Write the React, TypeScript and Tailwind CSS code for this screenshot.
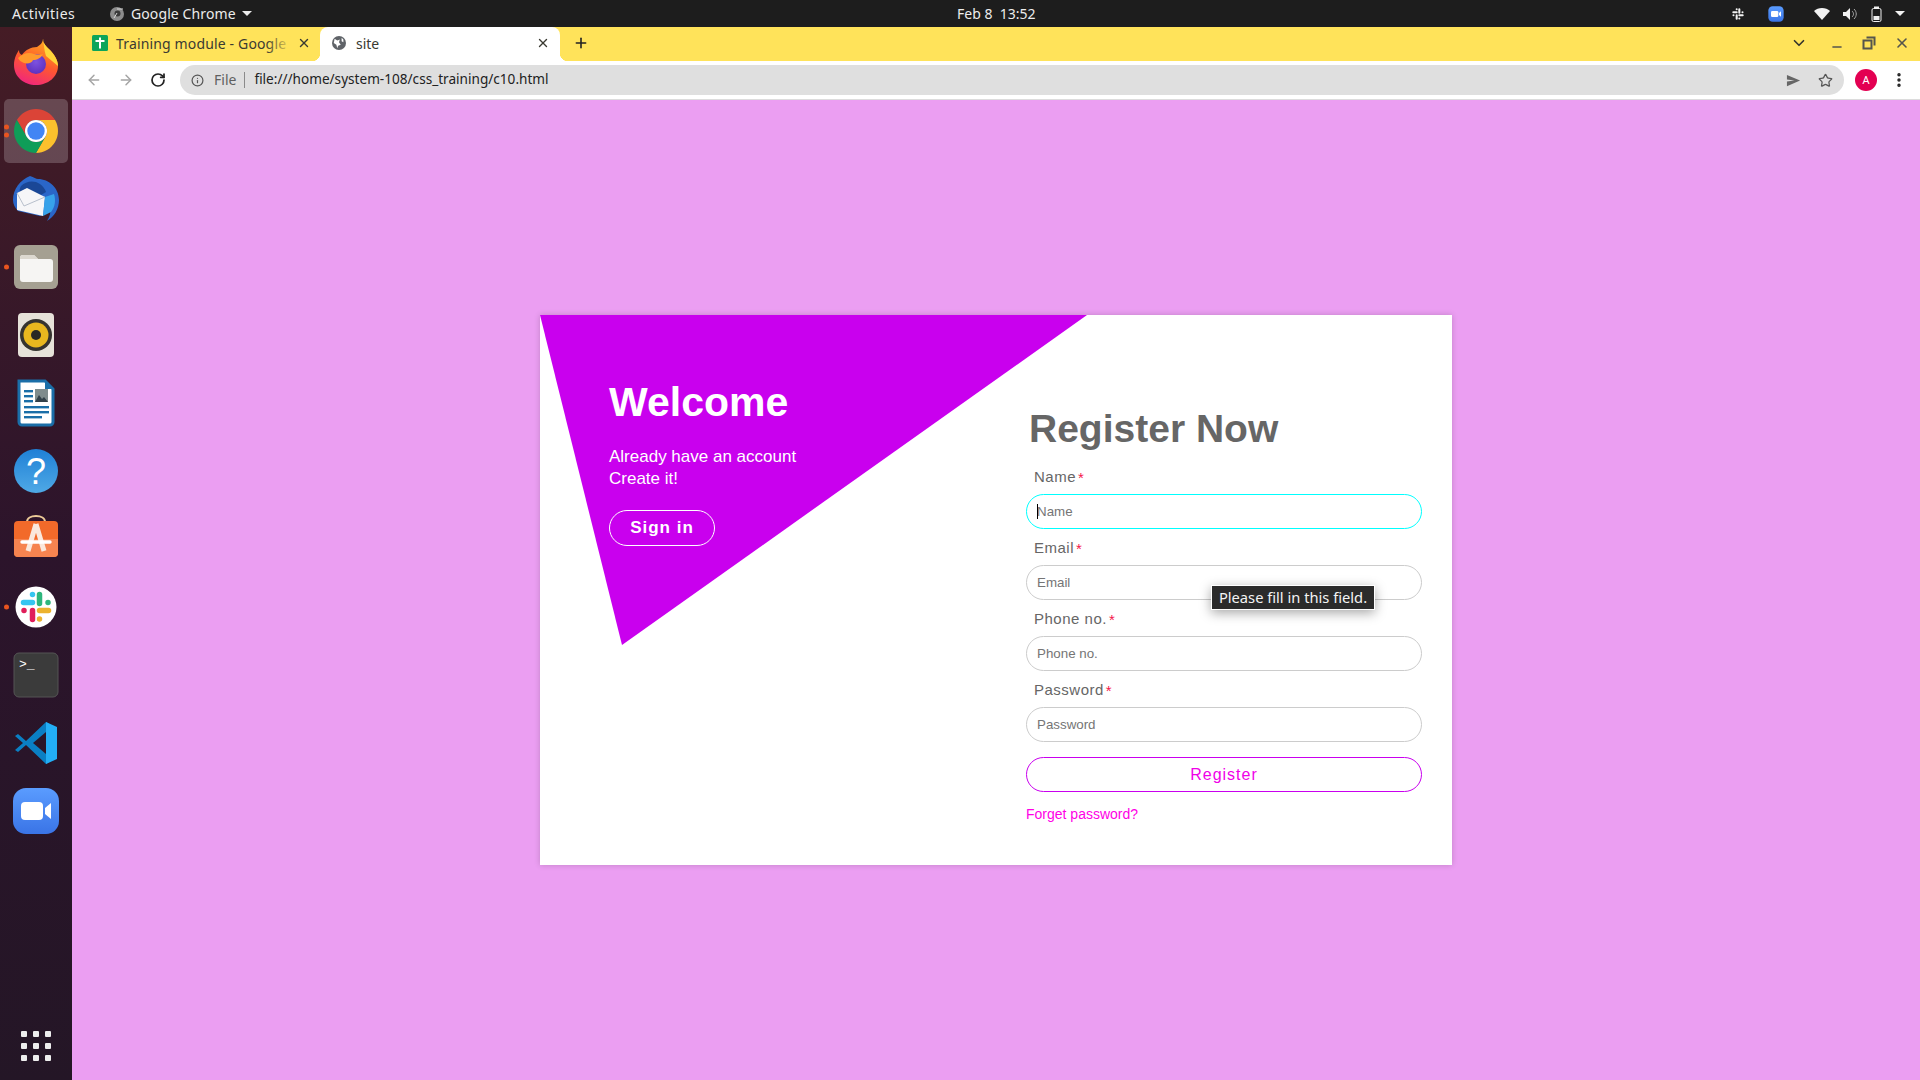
import type { ReactNode } from "react";
import { ArrowLeft, ArrowRight, ChevronDown, EllipsisVertical, Info, Minus, Plus, RotateCw, Star, X } from "lucide-react";

function DockFirefox() {
  return (
    <svg viewBox="0 0 48 48" className="h-12 w-12">
      <defs>
        <linearGradient id="ffBody" x1="0.7" y1="0" x2="0.3" y2="1">
          <stop offset="0" stopColor="#ffb020" />
          <stop offset="0.5" stopColor="#ff5a2c" />
          <stop offset="1" stopColor="#f0257e" />
        </linearGradient>
        <radialGradient id="ffCore" cx="0.5" cy="0.4" r="0.7">
          <stop offset="0" stopColor="#7d52e0" />
          <stop offset="1" stopColor="#5a2bb8" />
        </radialGradient>
      </defs>
      <g transform="translate(0,-1)">
        <path d="M31 0c0 6 3 8 7 12 5 5 8 11 8 16 0 11-10 19-22 19S2 39 2 27c0-7 3-12 5-15 0 3 1 4 3 5 3-5 9-8 15-8 3-2 6-4 6-9Z" fill="url(#ffBody)" />
        <path d="M31 0c0 6 3 8 7 12 5 5 8 11 8 16l-12-10c-2-6-2-11-3-18Z" fill="#ffd53a" />
        <circle cx="24" cy="26" r="10" fill="url(#ffCore)" />
        <path d="M6 20c5-5 11-6 16-4 4 1 7 1 9 0-2 4-6 6-10 6-1 3-5 4-9 3-3-1-5-3-6-5Z" fill="#ff9a2c" />
      </g>
    </svg>
  );
}

function DockChrome() {
  return (
    <svg viewBox="0 0 48 48" className="h-12 w-12">
      <path d="M4.95 13A22 22 0 0 1 43.05 13L24 13A11 11 0 0 0 14.47 29.5Z" fill="#db4437" />
      <path d="M43.05 13A22 22 0 0 1 24 46L33.53 29.5A11 11 0 0 0 24 13Z" fill="#fbc02d" />
      <path d="M24 46A22 22 0 0 1 4.95 13L14.47 29.5A11 11 0 0 0 33.53 29.5Z" fill="#0f9d58" />
      <circle cx="24" cy="24" r="11" fill="#fff" />
      <circle cx="24" cy="24" r="8.7" fill="#4285f4" />
    </svg>
  );
}

function DockThunderbird() {
  return (
    <svg viewBox="0 0 48 48" className="h-12 w-12">
      <path d="M18 1c4 1 6 3 8 3 11 0 21 9 21 21 0 9-5 17-12 21 3-5 4-9 3-13-3 4-6 7-10 8L6 36c-3-3-5-7-5-11C1 14 8 5 18 1Z" fill="#2a66c8" />
      <path d="M9 11c5-5 13-6 19-2 3 2 5 5 6 8l-10 6L8 18c-1-3 0-5 1-7Z" fill="#1a4796" />
      <path d="M5 18l10-5 18 9-2 19-26-6Z" fill="#f6f6f8" />
      <path d="M5 18l7 13 21-9" fill="none" stroke="#b8c0cc" strokeWidth="1" />
      <path d="M33 22l9-3c2 6 1 13-3 18l-8 4Z" fill="#37a2ea" />
    </svg>
  );
}

function DockFiles() {
  return (
    <svg viewBox="0 0 48 48" className="h-12 w-12">
      <rect x="2" y="2" width="44" height="44" rx="6" fill="#a5a092" />
      <path d="M8 15a3 3 0 0 1 3-3h11l4 4h12a3 3 0 0 1 3 3v17a3 3 0 0 1-3 3H11a3 3 0 0 1-3-3Z" fill="#f6f5f3" />
      <path d="M8 15a3 3 0 0 1 3-3h11l4 4H8Z" fill="#dcd8cf" />
    </svg>
  );
}

function DockRhythmbox() {
  return (
    <svg viewBox="0 0 48 48" className="h-12 w-12">
      <rect x="6" y="2" width="36" height="44" rx="4" fill="#e6e2d9" />
      <circle cx="24" cy="24" r="16" fill="#35332f" />
      <circle cx="24" cy="24" r="12.5" fill="#e8b71f" />
      <circle cx="24" cy="24" r="5" fill="#2a2824" />
    </svg>
  );
}

function DockWriter() {
  return (
    <svg viewBox="0 0 48 48" className="h-12 w-12">
      <path d="M7 2h26l8 8v33a3 3 0 0 1-3 3H10a3 3 0 0 1-3-3Z" fill="#fff" stroke="#1a6ea8" strokeWidth="3" />
      <path d="M33 1l9 9h-9Z" fill="#1a6ea8" />
      <rect x="12" y="11" width="9" height="2.4" fill="#1a6ea8" />
      <rect x="12" y="16" width="9" height="2.4" fill="#1a6ea8" />
      <rect x="12" y="21" width="9" height="2.4" fill="#1a6ea8" />
      <rect x="23" y="10" width="13" height="13" fill="#7f8c8d" />
      <path d="M23 23l4-7 3 4 2-2 4 5Z" fill="#33414a" />
      <rect x="12" y="27" width="25" height="2.4" fill="#1a6ea8" />
      <rect x="12" y="32" width="25" height="2.4" fill="#1a6ea8" />
      <rect x="12" y="37" width="18" height="2.4" fill="#1a6ea8" />
    </svg>
  );
}

function DockHelp() {
  return (
    <svg viewBox="0 0 48 48" className="h-12 w-12">
      <defs>
        <linearGradient id="helpFill" x1="0" y1="0" x2="0" y2="1">
          <stop offset="0" stopColor="#1f80d6" />
          <stop offset="1" stopColor="#4fa9e6" />
        </linearGradient>
      </defs>
      <circle cx="24" cy="24" r="22" fill="url(#helpFill)" />
      <text x="24" y="37" textAnchor="middle" fontSize="36" fill="#fff" className="font-['Liberation_Sans',sans-serif]">?</text>
    </svg>
  );
}

function DockShop() {
  return (
    <svg viewBox="0 0 48 48" className="h-12 w-12">
      <path d="M15 7c0-4 4-6 9-6s9 2 9 6" fill="none" stroke="#eccb98" strokeWidth="2" />
      <path d="M2 10a4 4 0 0 1 4-4h36a4 4 0 0 1 4 4v28a4 4 0 0 1-4 4H6a4 4 0 0 1-4-4Z" fill="#f26a2a" />
      <path d="M2 24h44v14a4 4 0 0 1-4 4H6a4 4 0 0 1-4-4Z" fill="#f68450" />
      <path d="M24 9L16 36M24 9l8 27" stroke="#fae8dc" strokeWidth="5" fill="none" />
      <path d="M10 27h28" stroke="#fff" strokeWidth="3.4" strokeLinecap="round" />
    </svg>
  );
}

function SlackMark({ mono }: { mono?: boolean }) {
  const tint = (color: string) => (mono ? "#f2f2f2" : color);
  return (
    <g strokeWidth="5.5" strokeLinecap="round" fill="none">
      <path d="M11.5 19.5h9M20.5 11.5v.01" stroke={tint("#36c5f0")} />
      <path d="M27.5 11.5v9M36 19.5v.01" stroke={tint("#2eb67d")} />
      <path d="M27.5 27.5h9M27.5 36v.01" stroke={tint("#ecb22e")} />
      <path d="M20.5 27.5v9M12 27.5v.01" stroke={tint("#e01e5a")} />
    </g>
  );
}

function DockSlack() {
  return (
    <svg viewBox="0 0 48 48" className="h-12 w-12">
      <circle cx="24" cy="24" r="20.5" fill="#fff" />
      <SlackMark />
    </svg>
  );
}

function DockTerminal() {
  return (
    <svg viewBox="0 0 48 48" className="h-12 w-12">
      <rect x="2" y="2" width="44" height="44" rx="5" fill="#3b3b3b" stroke="#555" strokeWidth="1" />
      <text x="7" y="17" fontSize="13" fill="#fff" className="font-['Liberation_Mono',monospace]">&gt;_</text>
    </svg>
  );
}

function DockVsCode() {
  return (
    <svg viewBox="0 0 48 48" className="h-12 w-12">
      <path d="M34 3L14 22 6 15l-3 2 8 7-8 7 3 2 8-7 20 19 5-3V6Z" fill="#0a7fc4" />
      <path d="M34 13L21 24l13 11Z" fill="#2a1628" />
      <path d="M34 3l11 5v32l-11 5Z" fill="#23aef5" />
    </svg>
  );
}

function ZoomMark({ size }: { size: string }) {
  return (
    <svg viewBox="0 0 48 48" className={size}>
      <defs>
        <linearGradient id="zoomFill" x1="0" y1="0" x2="0" y2="1">
          <stop offset="0" stopColor="#5a9cff" />
          <stop offset="1" stopColor="#3a74e6" />
        </linearGradient>
      </defs>
      <rect x="1" y="1" width="46" height="46" rx="13" fill="url(#zoomFill)" />
      <rect x="9" y="15" width="22" height="18" rx="4" fill="#fff" />
      <path d="M33 21l6-5v16l-6-5Z" fill="#fff" />
    </svg>
  );
}

const dockItems: { key: string; icon: ReactNode; dots?: number; active?: boolean }[] = [
  { key: "firefox", icon: <DockFirefox /> },
  { key: "chrome", icon: <DockChrome />, dots: 2, active: true },
  { key: "thunderbird", icon: <DockThunderbird /> },
  { key: "files", icon: <DockFiles />, dots: 1 },
  { key: "rhythmbox", icon: <DockRhythmbox /> },
  { key: "writer", icon: <DockWriter /> },
  { key: "help", icon: <DockHelp /> },
  { key: "shop", icon: <DockShop /> },
  { key: "slack", icon: <DockSlack />, dots: 1 },
  { key: "terminal", icon: <DockTerminal /> },
  { key: "vscode", icon: <DockVsCode /> },
  { key: "zoom", icon: <ZoomMark size="h-12 w-12" /> }
];

function Dock() {
  return (
    <aside className="flex w-[72px] shrink-0 flex-col items-center bg-gradient-to-b from-[#451c25] via-[#2c142b] to-[#241626] pt-[2px] pb-[19px]">
      {dockItems.map((item) => (
        <div key={item.key} className="relative flex h-[68px] w-[72px] items-center justify-center">
          {item.active ? <div className="absolute inset-x-1 inset-y-[2px] rounded-[5px] bg-white/20" /> : null}
          {item.dots ? (
            <div className="absolute left-[4px] top-1/2 flex -translate-y-1/2 flex-col gap-[3px]">
              {Array.from({ length: item.dots }).map((_, i) => (
                <span key={i} className="block h-[5px] w-[5px] rounded-full bg-[#e9541f]" />
              ))}
            </div>
          ) : null}
          <div className="relative">{item.icon}</div>
        </div>
      ))}
      <div className="mt-auto grid grid-cols-3 gap-[6px]">
        {Array.from({ length: 9 }).map((_, i) => (
          <span key={i} className="block h-[6px] w-[6px] rounded-[1px] bg-[#eeeeee]" />
        ))}
      </div>
    </aside>
  );
}

function TopBar() {
  return (
    <header className="flex h-[27px] shrink-0 items-center bg-[#1d1d1d] font-['Noto_Sans',sans-serif] text-[14px] text-[#ececec]">
      <div className="flex w-[957px] shrink-0 items-center">
        <span className="ml-3 w-[97px] tracking-[0.5px]">Activities</span>
        <svg viewBox="0 0 16 16" className="h-4 w-4">
          <circle cx="8" cy="8" r="7" fill="#8c8c8c" />
          <circle cx="8.5" cy="7.5" r="3" fill="#3a3a3a" />
          <path d="M8 3h6M5 12l3-5" stroke="#d8d8d8" strokeWidth="1" />
        </svg>
        <span className="ml-[6px] tracking-[0.1px]">Google Chrome</span>
        <span className="ml-[6px] h-0 w-0 border-x-[5px] border-t-[5px] border-x-transparent border-t-[#ececec]" />
      </div>
      <span className="whitespace-pre">Feb 8  13:52</span>
      <div className="ml-auto flex items-center">
        <svg viewBox="0 0 48 48" className="h-[18px] w-[18px]"><SlackMark mono /></svg>
        <div className="ml-[21px]"><ZoomMark size="h-4 w-4" /></div>
        <svg viewBox="0 0 16 16" className="ml-[30px] h-4 w-4">
          <path d="M0 5c4-4 12-4 16 0l-8 9Z" fill="#f2f2f2" />
        </svg>
        <svg viewBox="0 0 16 16" className="ml-[12px] h-4 w-4">
          <path d="M1 6h3l4-4v12l-4-4H1Z" fill="#f2f2f2" />
          <path d="M10 5c2 2 2 4 0 6M12 3c3 3 3 7 0 10" stroke="#a8a8a8" strokeWidth="1" fill="none" />
        </svg>
        <svg viewBox="0 0 16 16" className="ml-[11px] h-4 w-4">
          <rect x="3" y="2.5" width="9" height="13" rx="1.5" fill="none" stroke="#f2f2f2" strokeWidth="1" />
          <rect x="5" y="0.5" width="5" height="2" fill="#f2f2f2" />
          <rect x="4.5" y="10" width="6" height="4" fill="#f2f2f2" />
        </svg>
        <span className="ml-[10px] mr-[15px] h-0 w-0 border-x-[5px] border-t-[5px] border-x-transparent border-t-[#f2f2f2]" />
      </div>
    </header>
  );
}

function TabStrip() {
  return (
    <div className="flex h-[34px] shrink-0 items-stretch bg-[#ffe35a] font-['Noto_Sans',sans-serif] text-[14px] text-[#3a3a32]">
      <div className="relative ml-[20px] flex w-[228px] items-center pb-[2px]">
        <svg viewBox="0 0 16 16" className="h-4 w-4 shrink-0">
          <rect width="16" height="16" rx="1.5" fill="#0da55a" />
          <path d="M3.5 6h9M8 2.5v11" stroke="#fff" strokeWidth="2" />
        </svg>
        <span className="ml-[8px] whitespace-nowrap tracking-[0.15px]">Training module - Google</span>
        <div className="absolute right-[28px] top-0 h-full w-[26px] bg-gradient-to-r from-transparent to-[#ffe35a]" />
        <X className="absolute right-[9px] h-[14px] w-[14px]" strokeWidth={2.4} />
      </div>
      <div className="relative flex w-[240px] items-center rounded-t-[8px] bg-white pb-[2px]">
        <div className="absolute -left-[8px] bottom-0 h-[8px] w-[8px] bg-[radial-gradient(circle_at_0_0,transparent_8px,#ffffff_8.5px)]" />
        <div className="absolute -right-[8px] bottom-0 h-[8px] w-[8px] bg-[radial-gradient(circle_at_100%_0,transparent_8px,#ffffff_8.5px)]" />
        <svg viewBox="0 0 16 16" className="ml-[12px] h-[14px] w-[14px] shrink-0">
          <circle cx="8" cy="8" r="8" fill="#5f6368" />
          <path d="M3 3l3 2 3-1-1 3 2 3-3 1-1 3-1-4-3-2ZM11 2l2 2v3l-2-1Z" fill="#fff" />
        </svg>
        <span className="ml-[10px]">site</span>
        <X className="absolute right-[10px] h-[14px] w-[14px]" strokeWidth={2.4} />
      </div>
      <div className="ml-[13px] flex items-center pb-[2px]">
        <Plus className="h-4 w-4 text-[#222]" strokeWidth={2.4} />
      </div>
      <div className="ml-auto mr-[10px] flex items-center pb-[2px] text-[#55554c]">
        <ChevronDown className="h-[18px] w-[18px] text-[#33332c]" strokeWidth={2.2} />
        <Minus className="ml-[22px] mt-[8px] h-[14px] w-[14px]" strokeWidth={2.4} />
        <svg viewBox="0 0 14 14" className="ml-[18px] h-[14px] w-[14px]">
          <path d="M4.5 1.5h8v8M1.5 4.5h8v8h-8Z" fill="none" stroke="currentColor" strokeWidth="2" />
        </svg>
        <X className="ml-[18px] h-4 w-4" strokeWidth={2.4} />
      </div>
    </div>
  );
}

function Toolbar() {
  return (
    <div className="flex h-[39px] shrink-0 items-center border-b border-[#dcdcdc] bg-white font-['Noto_Sans',sans-serif] text-[14px] text-[#222]">
      <ArrowLeft className="ml-[14px] h-4 w-4 text-[#a4a4a4]" strokeWidth={2.2} />
      <ArrowRight className="ml-[16px] h-4 w-4 text-[#a4a4a4]" strokeWidth={2.2} />
      <RotateCw className="ml-[16px] h-4 w-4 text-[#222]" strokeWidth={2.6} />
      <div className="ml-[14px] flex h-[30px] flex-1 items-center rounded-full bg-[#dfdfdf]">
        <Info className="ml-[11px] h-[13px] w-[13px] text-[#555]" strokeWidth={2.2} />
        <span className="ml-[10px] pb-[1px] text-[#5f5f5f]">File</span>
        <span className="ml-[8px] h-4 w-px bg-[#8a8a8a]" />
        <span className="ml-[9px] pb-[1px] text-[13.6px]">file:///home/system-108/css_training/c10.html</span>
        <svg viewBox="0 0 16 16" className="ml-auto h-[15px] w-[15px]">
          <path d="M1 2l14 6-14 6 0-5 8-1-8-1Z" fill="#666" />
        </svg>
        <Star className="ml-[17px] mr-[11px] h-[15px] w-[15px] text-[#555]" strokeWidth={2} />
      </div>
      <div className="ml-[11px] flex h-[22px] w-[22px] items-center justify-center rounded-full bg-[#e30052] text-[11px] text-white">A</div>
      <EllipsisVertical className="ml-[13px] mr-[12px] h-[18px] w-[18px] text-[#222]" strokeWidth={2.6} />
    </div>
  );
}

function Field({ label, focused }: { label: string; focused?: boolean }) {
  return (
    <div>
      <div className="flex h-[36px] items-center pl-[8px] pt-[3px] text-[15px] tracking-[0.5px] text-[#666]">
        {label}
        <span className="ml-[2px] text-[15px] leading-none text-[#f5184a]">*</span>
      </div>
      <div className="relative">
        <input
          placeholder={label}
          className={`block h-[35px] w-full rounded-full border bg-white pl-[10px] text-[13.33px] outline-none placeholder:text-[#757575] ${
            focused ? "border-[#00ffff]" : "border-[#cccccc]"
          }`}
        />
        {focused ? <span className="absolute left-[11px] top-[10px] h-[15px] w-px bg-black" /> : null}
      </div>
    </div>
  );
}

function RegisterCard() {
  return (
    <div className="relative flex h-[550px] w-[912px] justify-between bg-white font-['Liberation_Sans',sans-serif] shadow-[0_0_6px_rgba(0,0,0,0.18)]">
      <div className="absolute left-0 top-0 h-[330px] w-[547px] bg-[#c900ee] [clip-path:polygon(0_0,100%_0,82px_100%)]" />
      <div className="relative pl-[69px] pt-[64px] text-white">
        <h1 className="text-[41px] font-bold leading-[46px]">Welcome</h1>
        <p className="mt-[21px] text-[17px] leading-[22px]">
          Already have an account
          <br />
          Create it!
        </p>
        <button className="mt-[20px] h-[36px] w-[106px] rounded-full border border-white text-[17px] font-bold tracking-[1px]">
          Sign in
        </button>
      </div>
      <div className="relative mr-[30px] w-[396px] pt-[91px]">
        <h2 className="mb-[6px] ml-[3px] text-[39px] font-bold leading-[46px] text-[#666]">Register Now</h2>
        <Field label="Name" focused />
        <Field label="Email" />
        <Field label="Phone no." />
        <Field label="Password" />
        <button className="mt-[15px] h-[35px] w-full rounded-full border border-[#c900ee] text-[16px] tracking-[1px] text-[#f000e8]">
          Register
        </button>
        <a className="mt-[14px] block text-[14px] leading-[16px] text-[#ff00e6]">Forget password?</a>
      </div>
      <div className="absolute left-[671px] top-[270px] flex h-[25px] w-[164px] items-center justify-center border border-white bg-[#2b2b2b] font-['Noto_Sans',sans-serif] text-[14.7px] text-[#f4f4f4] shadow-[0_3px_12px_rgba(0,0,0,0.35)]">
        Please fill in this field.
      </div>
    </div>
  );
}

export default function App() {
  return (
    <div className="flex h-screen w-full flex-col overflow-hidden">
      <TopBar />
      <div className="flex min-h-0 flex-1">
        <Dock />
        <main className="flex min-w-0 flex-1 flex-col">
          <TabStrip />
          <Toolbar />
          <div className="flex flex-1 items-center justify-center bg-[#eb9ef2]">
            <RegisterCard />
          </div>
        </main>
      </div>
    </div>
  );
}
